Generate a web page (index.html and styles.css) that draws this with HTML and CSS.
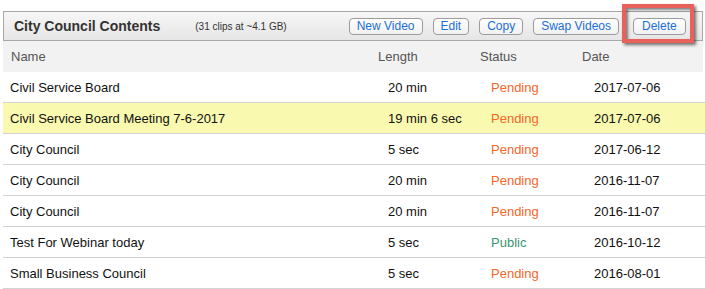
FILE: index.html
```html
<!DOCTYPE html>
<html>
<head>
<meta charset="utf-8">
<link rel="stylesheet" href="styles.css">
</head>
<body>
<div class="panel">
  <div class="bar">
    <h1 class="title">City Council Contents</h1>
    <span class="meta">(31 clips at ~4.1 GB)</span>
    <div class="actions">
      <button class="btn">New Video</button>
      <button class="btn">Edit</button>
      <button class="btn">Copy</button>
      <button class="btn">Swap Videos</button>
      <button class="btn btn-delete">Delete<span class="highlight"></span></button>
    </div>
  </div>
  <div class="row head">
    <div class="c-name">Name</div>
    <div class="c-len">Length</div>
    <div class="c-status">Status</div>
    <div class="c-date">Date</div>
  </div>
  <div class="row">
    <div class="c-name">Civil Service Board</div>
    <div class="c-len">20 min</div>
    <div class="c-status pending">Pending</div>
    <div class="c-date">2017-07-06</div>
  </div>
  <div class="row selected">
    <div class="c-name">Civil Service Board Meeting 7-6-2017</div>
    <div class="c-len">19 min 6 sec</div>
    <div class="c-status pending">Pending</div>
    <div class="c-date">2017-07-06</div>
  </div>
  <div class="row">
    <div class="c-name">City Council</div>
    <div class="c-len">5 sec</div>
    <div class="c-status pending">Pending</div>
    <div class="c-date">2017-06-12</div>
  </div>
  <div class="row">
    <div class="c-name">City Council</div>
    <div class="c-len">20 min</div>
    <div class="c-status pending">Pending</div>
    <div class="c-date">2016-11-07</div>
  </div>
  <div class="row">
    <div class="c-name">City Council</div>
    <div class="c-len">20 min</div>
    <div class="c-status pending">Pending</div>
    <div class="c-date">2016-11-07</div>
  </div>
  <div class="row">
    <div class="c-name">Test For Webinar today</div>
    <div class="c-len">5 sec</div>
    <div class="c-status public">Public</div>
    <div class="c-date">2016-10-12</div>
  </div>
  <div class="row">
    <div class="c-name">Small Business Council</div>
    <div class="c-len">5 sec</div>
    <div class="c-status pending">Pending</div>
    <div class="c-date">2016-08-01</div>
  </div>
</div>
</body>
</html>
```

FILE: styles.css
```css
html, body {
  margin: 0;
  padding: 0;
  background: #fff;
}

body {
  font-family: "Liberation Sans", Arial, sans-serif;
  color: #111;
}

.panel {
  margin: 11px 2px 0 3px;
}

.bar {
  display: flex;
  align-items: center;
  height: 28px;
  border: 1px solid #a8a8a8;
  background: linear-gradient(#f6f6f6, #e6e6e6);
  padding-left: 10px;
}

.title {
  margin: 0;
  font-size: 14px;
  font-weight: bold;
  color: #333;
}

.meta {
  font-size: 10px;
  color: #333;
  margin-left: 35px;
}

.actions {
  display: flex;
  gap: 10px;
  margin-left: 62px;
  align-items: center;
}

.btn {
  position: relative;
  margin: 0;
  font-family: "Liberation Sans", Arial, sans-serif;
  font-size: 12px;
  line-height: 15px;
  height: 17px;
  padding: 0 7px;
  border: 1px solid #9c9c9c;
  border-radius: 4px;
  background: linear-gradient(#ffffff, #f1f1f1);
  color: #1b6fd6;
  cursor: pointer;
}

.btn-delete {
  margin-left: 4px;
  padding: 0 8px;
}

.highlight {
  position: absolute;
  left: -12px;
  top: -15px;
  width: 64px;
  height: 31px;
  border: 4px solid #e8615a;
  box-shadow: 2px 2px 3px rgba(0, 0, 0, 0.55), inset 2px 2px 3px rgba(0, 0, 0, 0.5);
  pointer-events: none;
}

.row {
  display: grid;
  grid-template-columns: 378px 103px 103px 1fr;
  align-items: center;
  height: 30px;
  border-bottom: 1px solid #d3d3d3;
  font-size: 13px;
  padding-left: 7px;
  margin-right: -2px;
}

.row.head {
  grid-template-columns: 367px 102px 102px 1fr;
  height: 31px;
  border-bottom: none;
  background: #f2f2f2;
  color: #555;
  padding-left: 8px;
  margin-right: 0;
}

.selected {
  background: #f9f9b0;
}

.pending {
  color: #f4672a;
}

.public {
  color: #3d9470;
}
```
